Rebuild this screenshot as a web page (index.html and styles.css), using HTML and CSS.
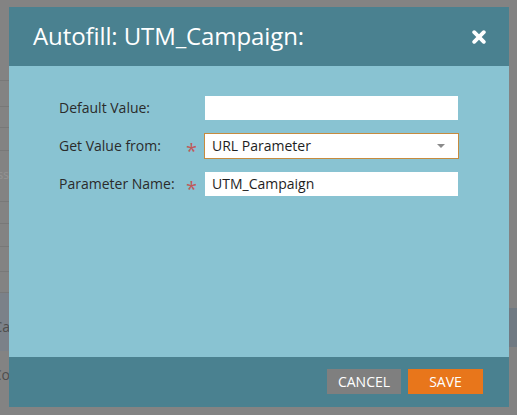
FILE: index.html
```html
<!DOCTYPE html>
<html>
<head>
<meta charset="utf-8">
<link rel="stylesheet" href="styles.css">
</head>
<body>
<div class="page">
  <div class="bg-rows">
    <div class="bg-row" style="height:22px"></div>
    <div class="bg-row" style="height:26px"></div>
    <div class="bg-row" style="height:21px"></div>
    <div class="bg-row" style="height:23px"></div>
    <div class="bg-row txt" style="height:51px"><span class="bg-t1">ss</span></div>
    <div class="bg-row" style="height:22px"></div>
    <div class="bg-row" style="height:23px"></div>
    <div class="bg-row" style="height:25px"></div>
    <div class="bg-row" style="height:21px"></div>
    <div class="bg-row dark" style="height:58px"><span class="bg-t2">Ca</span></div>
    <div class="bg-row plain" style="height:50px"><span class="bg-t2">Co</span></div>
  </div>
  <div class="bg-right"></div>

  <div class="modal">
    <div class="modal-head">
      <h1 class="modal-title">Autofill: UTM_Campaign:</h1>
      <span class="close">
        <svg width="14" height="14" viewBox="0 0 14 14"><path d="M2.2 2.2 L11.8 11.8 M11.8 2.2 L2.2 11.8" stroke="#fff" stroke-width="3.8" stroke-linecap="round"/></svg>
      </span>
    </div>
    <div class="modal-body">
      <div class="form-row">
        <label class="lbl">Default Value:</label>
        <span class="req"></span>
        <div class="field"></div>
      </div>
      <div class="form-row tall">
        <label class="lbl">Get Value from:</label>
        <span class="req">*</span>
        <div class="field select">URL Parameter<span class="arrow"></span></div>
      </div>
      <div class="form-row">
        <label class="lbl">Parameter Name:</label>
        <span class="req">*</span>
        <div class="field">UTM_Campaign</div>
      </div>
    </div>
    <div class="modal-foot">
      <button class="btn cancel">CANCEL</button>
      <button class="btn save">SAVE</button>
    </div>
  </div>
</div>
</body>
</html>
```

FILE: styles.css
```css
html, body {
  margin: 0;
  padding: 0;
}
body {
  background: #838383;
  font-family: "Open Sans", "Liberation Sans", sans-serif;
  width: 517px;
  height: 415px;
  overflow: hidden;
}
.page {
  position: relative;
  width: 517px;
  height: 415px;
}
.bg-rows {
  padding-top: 59px;
  width: 9px;
}
.bg-row {
  box-sizing: border-box;
  border-bottom: 1px solid #787878;
  position: relative;
  overflow: hidden;
}
.bg-row.dark {
  background: #7b8189;
  border-bottom: none;
}
.bg-row.plain {
  border-bottom: none;
}
.bg-t1 {
  position: absolute;
  right: 0;
  top: 17px;
  font-size: 12px;
  color: #939393;
  line-height: 14px;
}
.bg-t2 {
  position: absolute;
  right: -1px;
  top: 26px;
  font-size: 14px;
  color: #4e4e4e;
  line-height: 16px;
}
.bg-row.plain .bg-t2 {
  top: 16px;
}
.bg-right {
  position: absolute;
  left: 509px;
  top: 308px;
  width: 8px;
  height: 39px;
  background: #707a83;
}
.modal {
  position: absolute;
  left: 9px;
  top: 7px;
  width: 500px;
  height: 400px;
  display: flex;
  flex-direction: column;
}
.modal-head {
  height: 59px;
  background: #4a8190;
  display: flex;
  align-items: center;
  justify-content: space-between;
  padding: 0 23px 0 24px;
  flex: none;
}
.modal-title {
  margin: 0;
  font-weight: 400;
  font-size: 24px;
  color: #fff;
  letter-spacing: -0.1px;
  line-height: 30px;
  padding-bottom: 1px;
}
.close {
  display: flex;
  width: 14px;
  height: 14px;
  margin-top: 1px;
}
.modal-body {
  flex: 1;
  background: #89c3d2;
  padding: 30px 0 0 50px;
  display: flex;
  flex-direction: column;
  gap: 13px;
}
.form-row {
  display: flex;
  align-items: center;
  height: 24px;
}
.form-row.tall {
  height: 26px;
}
.lbl {
  width: 127px;
  font-size: 14px;
  color: #2b2b2b;
  line-height: 18px;
}
.req {
  width: 19px;
  color: #c0595a;
  font-size: 20px;
  line-height: 24px;
  height: 24px;
  padding-top: 5px;
  box-sizing: border-box;
}
.field {
  box-sizing: border-box;
  width: 253px;
  height: 24px;
  background: #fff;
  font-size: 14px;
  color: #1e1e1e;
  padding-left: 7px;
  line-height: 24px;
}
.field.select {
  position: relative;
  height: 26px;
  border: 1px solid #c68b3f;
  width: 255px;
  margin-left: -1px;
  line-height: 24px;
}
.arrow {
  position: absolute;
  right: 13px;
  top: 10px;
  width: 0;
  height: 0;
  border-left: 4px solid transparent;
  border-right: 4px solid transparent;
  border-top: 4px solid #8a8a8a;
}
.modal-foot {
  height: 50px;
  flex: none;
  background: #4a8190;
  display: flex;
  justify-content: flex-end;
  align-items: flex-start;
  padding: 12px 26px 0 0;
  box-sizing: border-box;
  gap: 7px;
}
.btn {
  border: none;
  height: 25px;
  font-family: "Open Sans", "Liberation Sans", sans-serif;
  font-size: 14px;
  color: #fff;
  padding: 0;
  line-height: 25px;
}
.cancel {
  width: 74px;
  background: #7f7f7f;
}
.save {
  width: 75px;
  background: #e8761b;
}
```
